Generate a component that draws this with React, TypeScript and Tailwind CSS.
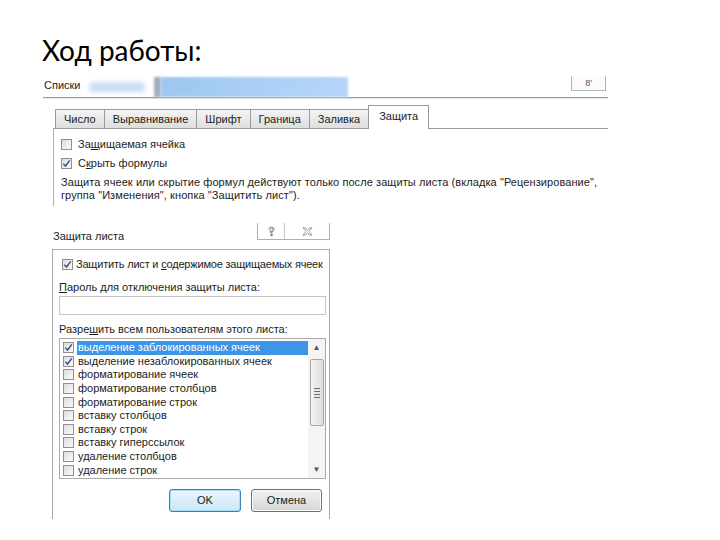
import type { ReactNode } from 'react'

const FONT = { fontFamily: '"Liberation Sans", Arial, sans-serif' }

function CheckBox({ checked = false }: { checked?: boolean }) {
  return (
    <span className="relative flex h-[11px] w-[11px] shrink-0 items-center justify-center border border-[#8f8f8f] bg-gradient-to-br from-[#dcdcdc] to-[#fbfbfb]">
      {checked ? (
        <svg viewBox="0 0 10 10" className="h-[9px] w-[9px]">
          <path d="M1.5 5.2 L4 7.8 L8.6 1.6" fill="none" stroke="#3b4f8a" strokeWidth="1.6" />
        </svg>
      ) : null}
    </span>
  )
}

function Tab({ label, active = false }: { label: string; active?: boolean }) {
  if (active) {
    return (
      <div className="relative -mb-px flex h-[24px] items-start border border-b-0 border-[#9a9a9a] bg-white px-[10px] pt-[4px]">
        {label}
      </div>
    )
  }
  return (
    <div className="flex h-[19px] items-center border border-r-0 border-b-0 border-[#9a9a9a] bg-gradient-to-b from-[#f4f4f4] to-[#dedede] px-[8px]">
      {label}
    </div>
  )
}

function Button({ children, primary = false }: { children: ReactNode; primary?: boolean }) {
  return (
    <div
      className={
        primary
          ? 'flex h-[23px] w-[72px] items-center justify-center rounded-[3px] border border-[#3c7fb1] bg-gradient-to-b from-[#eaf6fd] to-[#c9e6f6] shadow-[inset_0_0_0_1px_#a6dbf7]'
          : 'flex h-[23px] w-[71px] items-center justify-center rounded-[3px] border border-[#707070] bg-gradient-to-b from-[#f2f2f2] to-[#d6d6d6] shadow-[inset_0_0_0_1px_#fcfcfc]'
      }
    >
      {children}
    </div>
  )
}

const permissions: { label: string; checked: boolean }[] = [
  { label: 'выделение заблокированных ячеек', checked: true },
  { label: 'выделение незаблокированных ячеек', checked: true },
  { label: 'форматирование ячеек', checked: false },
  { label: 'форматирование столбцов', checked: false },
  { label: 'форматирование строк', checked: false },
  { label: 'вставку столбцов', checked: false },
  { label: 'вставку строк', checked: false },
  { label: 'вставку гиперссылок', checked: false },
  { label: 'удаление столбцов', checked: false },
  { label: 'удаление строк', checked: false },
]

export default function App() {
  return (
    <div className="h-[540px] w-[720px] overflow-hidden bg-white text-[11px] leading-[13px] text-[#1c1c1c]" style={FONT}>
      <h1 className="pl-[42px] pt-[33px] text-[28px] leading-[34px] text-black" style={{ fontFamily: 'Lato, "Open Sans", sans-serif' }}>
        Ход работы:
      </h1>

      {/* Format cells dialog, cropped */}
      <section className="ml-[43px] mt-[9px] h-[130px] w-[565px] bg-white">
        <div className="flex h-[22px] items-center border-b border-[#9c9c9c] shadow-[0_1px_0_#e6e6e6]">
          <span className="-mt-[3px] pl-[1px]">Списки</span>
          <span className="ml-[8px] h-[10px] w-[56px] rounded-sm bg-[#c9dff5] blur-[2px]" />
          <span className="ml-[9px] h-[20px] w-[7px] bg-[#a3aebd] blur-[1px]" />
          <span className="h-[20px] w-[187px] bg-gradient-to-r from-[#9fc6f0] via-[#a9cff7] to-[#b5d6f8] blur-[1px]" />
          <span className="ml-auto mr-[2px] flex h-[15px] w-[35px] items-center justify-center self-start border-x border-b border-[#b4b4b4] bg-[#fbfbfb] text-[9px] text-[#555]">
            8'
          </span>
        </div>

        <div className="mt-[7px] pl-[10px]">
          <div className="flex items-end border-b border-[#9a9a9a] pl-[2px]">
            <Tab label="Число" />
            <Tab label="Выравнивание" />
            <Tab label="Шрифт" />
            <Tab label="Граница" />
            <Tab label="Заливка" />
            <Tab active label="Защита" />
          </div>
          <div className="h-[77px] border-l border-[#b0b0b0] pl-[7px] pt-[9px]">
            <label className="flex items-center gap-[6px]">
              <CheckBox />
              <span>
                За<span className="underline">щ</span>ищаемая ячейка
              </span>
            </label>
            <label className="mt-[6px] flex items-center gap-[6px]">
              <CheckBox checked />
              <span>
                С<span className="underline">к</span>рыть формулы
              </span>
            </label>
            <p className="mt-[6px] tracking-[0.08px]">
              Защита ячеек или скрытие формул действуют только после защиты листа (вкладка "Рецензирование",
              <br />
              группа "Изменения", кнопка "Защитить лист").
            </p>
          </div>
        </div>
      </section>

      {/* Protect sheet dialog */}
      <section className="ml-[52px] mt-[17px] w-[278px]">
        <div className="flex h-[26px] items-start">
          <span className="mt-[7px] pl-[1px]">Защита листа</span>
          <div className="ml-auto flex h-[17px] items-center border-x border-b border-[#b0b0b0] bg-white">
            <span className="flex h-full w-[27px] items-center justify-center border-r border-[#c8c8c8]">
              <svg viewBox="0 0 10 12" className="h-[11px] w-[9px]">
                <path d="M2 3.5 Q2 1 5 1 Q8 1 8 3.5 Q8 5.2 5.6 6.2 L5.6 8 M4.4 8 L4.4 6 Q6.8 5 6.8 3.5 Q6.8 2.2 5 2.2 Q3.2 2.2 3.2 3.5 Z" fill="none" stroke="#6a6a6a" strokeWidth="0.8" />
                <rect x="4.3" y="9.3" width="1.5" height="1.5" fill="none" stroke="#6a6a6a" strokeWidth="0.7" />
              </svg>
            </span>
            <span className="flex h-full w-[44px] items-center justify-center">
              <svg viewBox="0 0 12 10" className="h-[9px] w-[11px]">
                <path d="M1 1 L4 1 L6 3.6 L8 1 L11 1 L7.6 5 L11 9 L8 9 L6 6.4 L4 9 L1 9 L4.4 5 Z" fill="none" stroke="#707070" strokeWidth="0.8" />
              </svg>
            </span>
          </div>
        </div>

        <div className="h-[270px] border-x border-t border-[#a8a8a8] bg-white pl-[6px] pr-[3px]">
          <label className="mt-[8px] flex items-center gap-[3px] whitespace-nowrap pl-[3px]">
            <CheckBox checked />
            <span className="tracking-[-0.2px]">
              Защитить лист и <span className="underline">с</span>одержимое защищаемых ячеек
            </span>
          </label>
          <div className="mt-[10px]">
            <span className="underline">П</span>ароль для отключения защиты листа:
          </div>
          <div className="mt-[2px] h-[19px] w-[267px] border border-[#c6c6c6] bg-white" />
          <div className="mt-[8px]">
            Разре<span className="underline">ш</span>ить всем пользователям этого листа:
          </div>
          <div className="mt-[2px] flex h-[141px] w-[267px] border border-[#a9a9a9] bg-white">
            <ul className="flex-1 pl-[3px] pt-[2px]">
              {permissions.map((item, index) => (
                <li key={item.label} className="flex h-[13.6px] items-center gap-[3px] whitespace-nowrap">
                  <CheckBox checked={item.checked} />
                  <span
                    className={
                      index === 0
                        ? 'flex h-full flex-1 items-center bg-[#3d95e6] pl-[1px] text-white'
                        : 'pl-[1px]'
                    }
                  >
                    {item.label}
                  </span>
                </li>
              ))}
            </ul>
            <div className="flex w-[17px] flex-col items-center bg-[#f4f4f4]">
              <span className="mt-[4px] text-[8px] leading-[10px] text-[#555]">▲</span>
              <div className="mt-[6px] flex h-[67px] w-[14px] items-center justify-center rounded-[2px] border border-[#a8a8a8] bg-gradient-to-r from-[#f2f2f2] to-[#dedede]">
                <div className="flex flex-col gap-[2px]">
                  <span className="h-px w-[6px] bg-[#6a6a6a]" />
                  <span className="h-px w-[6px] bg-[#6a6a6a]" />
                  <span className="h-px w-[6px] bg-[#6a6a6a]" />
                  <span className="h-px w-[6px] bg-[#6a6a6a]" />
                </div>
              </div>
              <span className="mt-auto mb-[3px] text-[8px] leading-[10px] text-[#555]">▼</span>
            </div>
          </div>
          <div className="mt-[10px] flex justify-end gap-[10px] pr-[4px]">
            <Button primary>OK</Button>
            <Button>Отмена</Button>
          </div>
        </div>
      </section>
    </div>
  )
}
